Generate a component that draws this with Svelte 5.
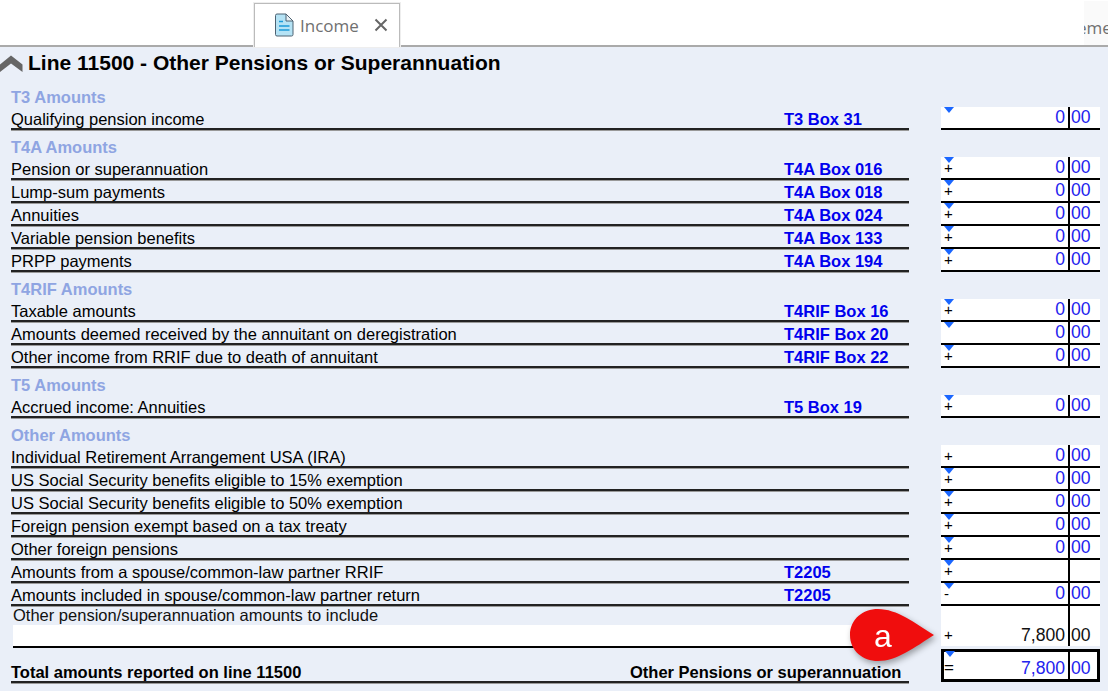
<script lang="ts">
	const sections = [
		{
			title: 'T3 Amounts',
			rows: [{ label: 'Qualifying pension income', code: 'T3 Box 31', sign: '', mark: true, value: '0', cents: '00' }]
		},
		{
			title: 'T4A Amounts',
			rows: [
				{ label: 'Pension or superannuation', code: 'T4A Box 016', sign: '+', mark: true, value: '0', cents: '00' },
				{ label: 'Lump-sum payments', code: 'T4A Box 018', sign: '+', mark: true, value: '0', cents: '00' },
				{ label: 'Annuities', code: 'T4A Box 024', sign: '+', mark: true, value: '0', cents: '00' },
				{ label: 'Variable pension benefits', code: 'T4A Box 133', sign: '+', mark: true, value: '0', cents: '00' },
				{ label: 'PRPP payments', code: 'T4A Box 194', sign: '+', mark: true, value: '0', cents: '00' }
			]
		},
		{
			title: 'T4RIF Amounts',
			rows: [
				{ label: 'Taxable amounts', code: 'T4RIF Box 16', sign: '+', mark: true, value: '0', cents: '00' },
				{ label: 'Amounts deemed received by the annuitant on deregistration', code: 'T4RIF Box 20', sign: '', mark: true, value: '0', cents: '00' },
				{ label: 'Other income from RRIF due to death of annuitant', code: 'T4RIF Box 22', sign: '+', mark: true, value: '0', cents: '00' }
			]
		},
		{
			title: 'T5 Amounts',
			rows: [{ label: 'Accrued income: Annuities', code: 'T5 Box 19', sign: '+', mark: true, value: '0', cents: '00' }]
		},
		{
			title: 'Other Amounts',
			rows: [
				{ label: 'Individual Retirement Arrangement USA (IRA)', code: '', sign: '+', mark: false, value: '0', cents: '00' },
				{ label: 'US Social Security benefits eligible to 15% exemption', code: '', sign: '+', mark: true, value: '0', cents: '00' },
				{ label: 'US Social Security benefits eligible to 50% exemption', code: '', sign: '+', mark: true, value: '0', cents: '00' },
				{ label: 'Foreign pension exempt based on a tax treaty', code: '', sign: '+', mark: true, value: '0', cents: '00' },
				{ label: 'Other foreign pensions', code: '', sign: '+', mark: true, value: '0', cents: '00' },
				{ label: 'Amounts from a spouse/common-law partner RRIF', code: 'T2205', sign: '+', mark: true, value: '', cents: '' },
				{ label: 'Amounts included in spouse/common-law partner return', code: 'T2205', sign: '-', mark: true, value: '0', cents: '00' }
			]
		}
	];
</script>

<div class="tabs">
	<div class="tab">
		<svg class="doc" width="20" height="24" viewBox="0 0 20 24">
			<path d="M1.5 2.5 a1.5 1.5 0 0 1 1.5-1.5 H12 L19 8 V21.5 a1.5 1.5 0 0 1-1.5 1.5 H3 a1.5 1.5 0 0 1-1.5-1.5 Z" fill="#b5e3f5" stroke="#4d6272" />
			<path d="M12 1 V8 H19 Z" fill="#e8f1f6" stroke="#4d6272" stroke-linejoin="round" />
			<path d="M5 8.5 H9 M5 13 H15.5 M5 17 H15.5" stroke="#1c9bd8" stroke-width="1.4" />
		</svg>
		<span class="tab-name">Income</span>
		<svg class="close" width="14" height="14" viewBox="0 0 14 14">
			<path d="M1.5 1.5 L12.5 12.5 M12.5 1.5 L1.5 12.5" stroke="#666" stroke-width="2" />
		</svg>
	</div>
	<div class="tab-rest"><span>eme</span></div>
</div>

<div class="page">
	<div class="heading">
		<svg width="23" height="17" viewBox="0 0 23 17">
			<path d="M0 17 V9.5 L11 0.5 L22.5 9.5 V17 L11 8.5 Z" fill="#666" />
		</svg>
		<h1>Line 11500 - Other Pensions or Superannuation</h1>
	</div>

	{#each sections as section, i}
		<div class="section-title" class:first={i === 0}>{section.title}</div>
		{#each section.rows as row}
			<div class="row">
				<div class="label">
					<span class="text">{row.label}</span>
					<span class="code">{row.code}</span>
				</div>
				<div class="amount">
					{#if row.mark}<span class="mark"></span>{/if}
					<span class="sign">{row.sign}</span>
					<span class="value">{row.value}</span>
					<span class="cents">{row.cents}</span>
				</div>
			</div>
		{/each}
	{/each}

	<div class="row other">
		<div class="label">
			<span class="other-text">Other pension/superannuation amounts to include</span>
			<div class="other-input"></div>
		</div>
		<div class="amount plain">
			<span class="sign">+</span>
			<span class="value">7,800</span>
			<span class="cents">00</span>
		</div>
	</div>

	<div class="row total">
		<div class="label">
			<span class="text">Total amounts reported on line 11500</span>
			<span class="total-right">Other Pensions or superannuation</span>
		</div>
		<div class="amount boxed">
			<span class="mark"></span>
			<span class="sign">=</span>
			<span class="value">7,800</span>
			<span class="cents">00</span>
		</div>
	</div>

	<div class="callout">
		<svg width="90" height="60" viewBox="0 0 90 60">
			<path d="M1 28 C1 12 14 2 29 2 C48 2 66 16 85 28 C66 40 48 54 29 54 C14 54 1 44 1 28 Z" fill="#f00d0d" />
		</svg>
		<span>a</span>
	</div>
</div>

<style>
	:global(body) {
		margin: 0;
		overflow: hidden;
		background: #eaeff8;
		font-family: 'Liberation Sans', Arial, sans-serif;
	}
	.tabs {
		display: flex;
		box-sizing: border-box;
		height: 47px;
		padding-left: 254px;
		background: #fff;
		border-bottom: 2px solid #aaa;
	}
	.tab {
		display: flex;
		align-items: center;
		box-sizing: border-box;
		width: 146px;
		height: 44px;
		margin-top: 3px;
		padding: 0 11px 2px 19px;
		background: #fff;
		border: 1px solid #bbb;
		border-bottom: none;
		box-shadow: 0 0 0 1px #eee;
		position: relative;
	}
	.doc {
		flex-shrink: 0;
	}
	.tab-name {
		flex: 1;
		margin-left: 6px;
		padding-top: 2px;
		font-family: 'Open Sans', sans-serif;
		font-size: 17px;
		color: #707070;
	}
	.tab-rest {
		flex: 1;
		display: flex;
		justify-content: flex-end;
		align-items: center;
		overflow: hidden;
	}
	.tab-rest span {
		display: block;
		width: 24px;
		height: 44px;
		line-height: 54px;
		overflow: hidden;
		text-indent: -7px;
		background: #fafafa;
		font-family: 'Open Sans', sans-serif;
		font-size: 17px;
		color: #707070;
	}
	.page {
		position: relative;
		height: 644px;
		overflow: hidden;
	}
	.heading {
		display: flex;
		align-items: center;
		gap: 5px;
		height: 32px;
		margin-bottom: 9px;
	}
	h1 {
		margin: 0;
		font-size: 21px;
		font-weight: 700;
		color: #000;
	}
	.section-title {
		height: 19px;
		margin-top: 8px;
		padding-left: 11px;
		font-size: 16.5px;
		line-height: 19px;
		font-weight: 700;
		color: #8fa5e2;
	}
	.section-title.first {
		margin-top: 0;
	}
	.row {
		display: grid;
		grid-template-columns: 909px 159px;
		column-gap: 32px;
		height: 23px;
	}
	.label {
		display: flex;
		align-items: flex-end;
		box-sizing: border-box;
		margin-left: 11px;
		border-bottom: 2px solid #222;
		box-shadow: 0 1px 0 #999;
		font-size: 16.5px;
		line-height: 17px;
		color: #000;
		height: 23px;
		width: 898px;
	}
	.text {
		width: 773px;
		white-space: nowrap;
	}
	.code {
		font-weight: 700;
		color: #0000ee;
		white-space: nowrap;
	}
	.amount {
		position: relative;
		display: grid;
		grid-template-columns: 127px 2px 1fr;
		box-sizing: border-box;
		height: 23px;
		background: #fff;
		border-bottom: 2px solid #000;
		font-size: 17.6px;
		line-height: 21px;
		color: #2222ee;
	}
	.amount::before {
		content: '';
		grid-column: 2;
		grid-row: 1;
		align-self: stretch;
		background: #000;
	}
	.mark {
		position: absolute;
		left: 3px;
		top: 0;
		width: 0;
		height: 0;
		border-left: 5px solid transparent;
		border-right: 5px solid transparent;
		border-top: 6px solid #1a66ff;
	}
	.sign {
		position: absolute;
		left: 3px;
		top: 0;
		font-size: 15px;
		color: #000;
	}
	.value {
		grid-column: 1;
		grid-row: 1;
		text-align: right;
		padding-right: 3px;
	}
	.cents {
		grid-column: 3;
		grid-row: 1;
		padding-left: 1px;
	}
	.other {
		height: 43px;
	}
	.other .label {
		display: block;
		height: 42px;
		margin-left: 13px;
		width: 896px;
		border-bottom: 2px solid #000;
		box-shadow: none;
		line-height: 19px;
	}
	.other-text {
		display: block;
		height: 19px;
		color: #111;
	}
	.other-input {
		height: 21px;
		background: #fff;
	}
	.amount.plain {
		height: 40px;
		border-bottom: none;
		color: #111;
	}
	.amount.plain .sign {
		top: auto;
		bottom: 1px;
	}
	.amount.plain .value,
	.amount.plain .cents {
		align-self: end;
	}
	.total {
		height: 33px;
	}
	.total .label {
		height: 34px;
		font-weight: 700;
	}
	.total .text {
		width: 619px;
	}
	.total-right {
		white-space: nowrap;
	}
	.amount.boxed {
		height: 33px;
		border: 3px solid #000;
		grid-template-columns: 124px 2px 1fr;
	}
	.amount.boxed .value,
	.amount.boxed .cents {
		align-self: end;
	}
	.amount.boxed .mark {
		left: 1px;
		top: -1px;
	}
	.amount.boxed .sign {
		left: 0;
		top: 5px;
		font-size: 17px;
	}
	.callout {
		position: absolute;
		left: 849px;
		top: 560px;
		width: 90px;
		height: 60px;
		filter: drop-shadow(2px 3px 3px rgba(0, 0, 0, 0.35));
	}
	.callout svg {
		display: block;
	}
	.callout span {
		position: absolute;
		left: 25px;
		top: 11px;
		font-family: 'Liberation Sans', sans-serif;
		font-size: 32px;
		line-height: 36px;
		color: #fff;
	}
</style>
